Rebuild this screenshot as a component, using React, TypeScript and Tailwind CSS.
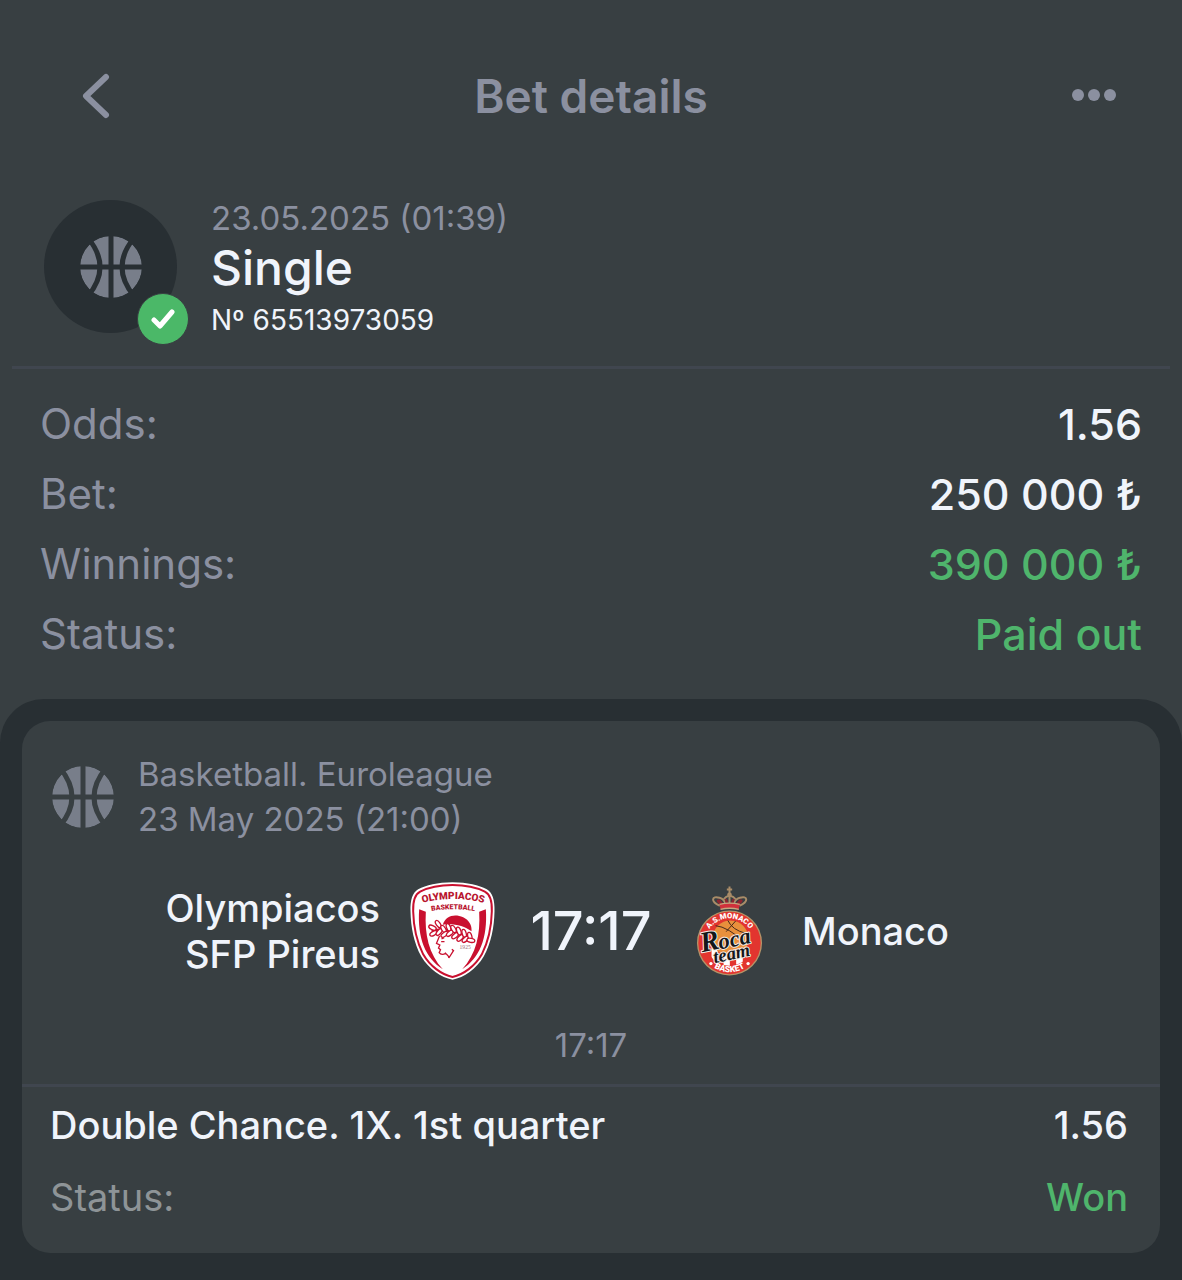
import React from "react";

const BasketballIcon = () => (
    <svg viewBox="0 0 62 62" className="size-[62px] shrink-0" fill="none" aria-hidden="true">
        <defs>
            <mask id="seams">
                <circle cx="31" cy="31" r="31" fill="white" />
                <path
                    d="M31 0V62M0 31H62M8 2Q32 31 8 60M54 2Q30 31 54 60"
                    stroke="black"
                    strokeWidth="5"
                />
            </mask>
        </defs>
        <circle cx="31" cy="31" r="31" fill="#787e8a" mask="url(#seams)" />
    </svg>
);

// x, y, angle
const leaves = [
    [95, 173, 25], [98, 190, -30], [112, 162, 55], [115, 186, -50], [128, 177, 60],
    [131, 193, -35], [143, 172, 70], [147, 190, -40], [158, 177, 60], [163, 197, -40],
    [174, 183, 70], [178, 204, -45], [190, 190, 75], [194, 208, -40], [207, 199, 75],
    [210, 211, 10],
];

const OlympiacosLogo = () => (
    <svg viewBox="28 36 254 294" className="h-[98px] w-[85px] shrink-0" role="img" aria-label="Olympiacos">
        <defs>
            <path id="shield-top" d="M60 100Q155 74 254 100" />
            <path id="shield-sub" d="M84 125Q156 110 230 125" />
        </defs>
        <path
            d="M155 37C110 37 76 46 52 58C35 68 28 91 29 124C30 172 39 219 61 259C84 298 121 323 155 329C190 323 226 298 249 259C271 219 280 172 281 124C282 91 275 68 258 58C234 46 200 37 155 37Z"
            fill="#fff"
        />
        <path
            d="M155 45C115 45 81 53 58 65C42 73 36 93 37 124C38 169 47 214 67 253C87 288 122 314 155 321C188 314 223 288 243 253C263 214 272 169 273 124C274 93 268 73 252 65C229 53 195 45 155 45Z"
            fill="none"
            stroke="#c9102f"
            strokeWidth="6"
        />
        <path d="M55 118L75 125C71 195 84 251 126 298C74 265 49 205 55 118Z" fill="#c9102f" />
        <path d="M255 118L235 125C239 195 226 251 184 298C236 265 261 205 255 118Z" fill="#c9102f" />
        <g fill="#b8152f" fontFamily="Roboto, sans-serif" fontWeight="900" textAnchor="middle">
            <text fontSize="30">
                <textPath href="#shield-top" startOffset="50%">OLYMPIACOS</textPath>
            </text>
            <text fontSize="21">
                <textPath href="#shield-sub" startOffset="50%">BASKETBALL</textPath>
            </text>
        </g>
        <path d="M126 164C134 137 162 130 187 142C205 151 214 166 212 184C190 168 160 160 126 164Z" fill="#c9102f" />
        <path d="M92 182Q150 170 212 206" fill="none" stroke="#c9102f" strokeWidth="7" />
        <g fill="#fff" stroke="#c9102f" strokeWidth="4">
            {leaves.map(([x, y, a]) => (
                <ellipse key={`${x}-${y}`} cx={x} cy={y} rx="12" ry="6" transform={`rotate(${a} ${x} ${y})`} />
            ))}
        </g>
        <path
            d="M116 198L107 220L117 225L113 234L119 239L115 248Q122 258 136 249M132 248Q145 258 144 264L158 242L153 238M130 203L122 207M121 215H131"
            fill="none"
            stroke="#c9102f"
            strokeWidth="4"
        />
        <text x="193" y="238" fontSize="17" fill="#a07078" fontFamily="Liberation Serif, serif" textAnchor="middle">
            1925
        </text>
    </svg>
);

const MonacoLogo = () => (
    <svg viewBox="22 33 256 270" className="h-[90px] w-[85px] shrink-0" role="img" aria-label="Monaco">
        <defs>
            <path id="roundel-top" d="M76 204A74 74 0 0 1 224 204" />
            <path id="roundel-bottom" d="M62 204A88 88 0 0 0 238 204" />
            <clipPath id="roundel-core">
                <circle cx="150" cy="204" r="69" />
            </clipPath>
        </defs>
        {/* crown */}
        <g fill="none" stroke="#a98c68" strokeWidth="6">
            <path d="M121 92C92 80 96 60 120 68C130 70 136 78 138 88M180 92C209 80 205 60 181 68C171 70 165 78 163 88" />
            <path d="M133 72Q142 60 150 63Q159 60 168 72M150 63V88M150 34V56M142 43H158" />
        </g>
        <path d="M121 88C107 79 110 71 122 74L134 88ZM180 88C194 79 191 71 179 74L167 88ZM138 86L136 72Q143 66 147 86ZM162 86L165 72Q158 66 154 86Z" fill="#8e2530" />
        <path d="M120 87Q150 80 181 87L178 103Q150 97 123 103Z" fill="#d0303b" />
        <path d="M120 88Q150 80 181 88M123 103Q150 96 178 103" stroke="#c4a880" strokeWidth="4" fill="none" />
        <circle cx="150" cy="59" r="7" fill="#a98c68" />
        {/* roundel */}
        <circle cx="150" cy="204" r="98" fill="#b59468" />
        <circle cx="150" cy="204" r="94" fill="#e2352f" />
        <g clipPath="url(#roundel-core)">
            <rect x="80" y="130" width="140" height="150" fill="#e2352f" />
            <path d="M96 220H114V280H96ZM132 220H151V280H132ZM170 220H190V280H170Z" fill="#fff" />
            <circle cx="153" cy="190" r="54" fill="#e8903c" />
            <path d="M108 152Q145 155 199 205M140 170L170 136M145 136Q158 165 199 175" stroke="#44281c" strokeWidth="3" fill="none" />
        </g>
        <g
            fill="#15171a"
            stroke="#f4ece6"
            strokeWidth="6"
            strokeLinejoin="round"
            paintOrder="stroke"
            fontFamily="Liberation Serif, serif"
            fontStyle="italic"
            fontWeight="700"
            textAnchor="middle"
        >
            <text x="156" y="254" fontSize="56" transform="rotate(-12 156 236)">team</text>
            <text x="90" y="227" fontSize="86" transform="rotate(-12 90 200)">R</text>
            <text x="166" y="214" fontSize="68" transform="rotate(-12 166 200)">oca</text>
        </g>
        <g fill="#fff" fontFamily="Roboto, sans-serif" fontWeight="900" textAnchor="middle">
            <text fontSize="23">
                <textPath href="#roundel-top" startOffset="50%">A.S.MONACO</textPath>
            </text>
            <text fontSize="26">
                <textPath href="#roundel-bottom" startOffset="50%">BASKET</textPath>
            </text>
        </g>
        <circle cx="94" cy="266" r="5" fill="#fff" />
        <circle cx="206" cy="266" r="5" fill="#fff" />
    </svg>
);

const summary = [
    { label: "Odds:", value: "1.56", color: "text-[#f0f4fb]" },
    { label: "Bet:", value: "250 000 ₺", color: "text-[#f0f4fb]" },
    { label: "Winnings:", value: "390 000 ₺", color: "text-[#4fb56c]" },
    { label: "Status:", value: "Paid out", color: "text-[#4fb56c]" },
];

export default function App() {
    return (
        <main className="flex min-h-screen flex-col bg-[#383f42] font-['Inter',sans-serif] text-[#f0f4fb]">
            <header className="grid grid-cols-[1fr_auto_1fr] items-center px-16 pt-16 text-[#8b90a0]">
                <button type="button" aria-label="Back" className="flex size-16 items-center justify-center">
                    <svg viewBox="0 0 28 46" className="h-[46px] w-7" fill="none" stroke="currentColor" strokeWidth="6" strokeLinecap="round" strokeLinejoin="round">
                        <path d="M24 4L4 23L24 42" />
                    </svg>
                </button>
                <h1 className="text-[46px] leading-16 font-semibold">Bet details</h1>
                <button type="button" aria-label="More" className="flex h-16 items-center justify-self-end">
                    <svg viewBox="0 0 46 14" className="h-[14px] w-[46px]" fill="currentColor">
                        <circle cx="6" cy="6" r="6" />
                        <circle cx="22" cy="6" r="6" />
                        <circle cx="38" cy="6" r="6" />
                    </svg>
                </button>
            </header>

            <section className="mx-3 mt-[72px] flex gap-[34px] border-b-3 border-[#40464f] px-8 pb-[26px]">
                <div className="relative flex size-[133px] shrink-0 items-center justify-center rounded-full bg-[#282f33]">
                    <BasketballIcon />
                    <span className="absolute -right-3 -bottom-3 flex size-[52px] items-center justify-center rounded-full border border-[#383f42] bg-[#4bb868]">
                        <svg viewBox="0 0 24 20" className="h-5 w-6" fill="none" stroke="white" strokeWidth="5" strokeLinecap="round" strokeLinejoin="round" aria-hidden="true">
                            <path d="M3 11L9 17L21 3" />
                        </svg>
                    </span>
                </div>
                <div>
                    <p className="text-[33px] leading-9 text-[#8b90a0]">23.05.2025 (01:39)</p>
                    <h2 className="text-[48px] leading-16 font-medium">Single</h2>
                    <p className="text-[28px] leading-10">Nº 65513973059</p>
                </div>
            </section>

            <dl className="px-10 pt-5 pb-[30px] text-[43px] leading-[70px]">
                {summary.map((row) => (
                    <div key={row.label} className="flex justify-between">
                        <dt className="text-[42px] text-[#8b90a0]">{row.label}</dt>
                        <dd className={`font-medium ${row.color}`}>{row.value}</dd>
                    </div>
                ))}
            </dl>

            <section className="grow rounded-t-[44px] bg-[#282f33] px-[22px] pt-[22px] pb-[27px]">
                <article className="rounded-[28px] bg-[#383f42]">
                    <div className="flex items-center gap-6 px-[30px] pt-[31px] text-[33px] leading-[45px] text-[#8b90a0]">
                        <BasketballIcon />
                        <div>
                            <p>Basketball. Euroleague</p>
                            <p>23 May 2025 (21:00)</p>
                        </div>
                    </div>

                    <div className="mt-10 grid grid-cols-[1fr_192px_1fr] items-center text-[38px] leading-[46px] font-medium">
                        <div className="flex items-center justify-end gap-[30px] text-right">
                            <p>Olympiacos<br />SFP Pireus</p>
                            <OlympiacosLogo />
                        </div>
                        <p className="text-center text-[54px]">17:17</p>
                        <div className="flex items-center gap-[30px]">
                            <MonacoLogo />
                            <p>Monaco</p>
                        </div>
                    </div>

                    <p className="mt-[42px] pb-4 text-center text-[33px] leading-[46px] text-[#8b90a0]">17:17</p>

                    <div className="border-t-3 border-[#40464f] pt-0.5 pr-8 pb-5 pl-7 text-[38px] leading-[72px]">
                        <div className="flex justify-between font-medium">
                            <p>Double Chance. 1X. 1st quarter</p>
                            <p>1.56</p>
                        </div>
                        <div className="flex justify-between">
                            <p className="text-[#8e9497]">Status:</p>
                            <p className="font-medium text-[#4fb56c]">Won</p>
                        </div>
                    </div>
                </article>
            </section>
        </main>
    );
}
